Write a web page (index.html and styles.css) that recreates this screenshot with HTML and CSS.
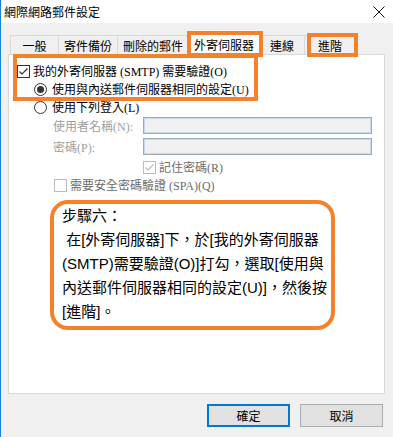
FILE: index.html
```html
<!DOCTYPE html>
<html lang="zh-Hant">
<head>
  <meta charset="UTF-8" />
  <title>網際網路郵件設定</title>
  <link rel="stylesheet" href="styles.css">
</head>
<body>
  <div class="window">
    <div class="titlebar">
      <span class="title">網際網路郵件設定</span>
      <svg class="close" width="12" height="12" viewBox="0 0 12 12">
        <path d="M0.5 0.5 L11.5 11.5 M11.5 0.5 L0.5 11.5" stroke="#111" stroke-width="1" fill="none"/>
      </svg>
    </div>

    <div class="tabs">
      <div class="tab w1">一般</div>
      <div class="tab w2">寄件備份</div>
      <div class="tab w3">刪除的郵件</div>
      <div class="tab active">外寄伺服器</div>
      <div class="tab w5">連線</div>
      <div class="tab w6">進階</div>
    </div>

    <div class="panel">
      <div class="row">
        <svg class="box" width="13" height="13" viewBox="0 0 13 13">
          <rect x="0.5" y="0.5" width="12" height="12" fill="#fff" stroke="#333"/>
          <path d="M2.5 6.5 L5 9 L10.5 3.5" stroke="#333" stroke-width="1.2" fill="none"/>
        </svg>
        <span class="label">我的外寄伺服器 (SMTP) 需要驗證(O)</span>
      </div>
      <div class="row indent">
        <svg class="radio" width="13" height="13" viewBox="0 0 13 13">
          <circle cx="6.5" cy="6.5" r="6" fill="#fff" stroke="#333"/>
          <circle cx="6.5" cy="6.5" r="3.5" fill="#333"/>
        </svg>
        <span class="label">使用與內送郵件伺服器相同的設定(U)</span>
      </div>
      <div class="row indent">
        <svg class="radio" width="13" height="13" viewBox="0 0 13 13">
          <circle cx="6.5" cy="6.5" r="6" fill="#fff" stroke="#333"/>
        </svg>
        <span class="label">使用下列登入(L)</span>
      </div>
      <div class="field first">
        <span class="field-label">使用者名稱(N):</span>
        <div class="input"></div>
      </div>
      <div class="field">
        <span class="field-label">密碼(P):</span>
        <div class="input"></div>
      </div>
      <div class="row remember">
        <svg class="box" width="13" height="13" viewBox="0 0 13 13">
          <rect x="0.5" y="0.5" width="12" height="12" fill="#fff" stroke="#bcbcbc"/>
          <path d="M2.5 6.5 L5 9 L10.5 3.5" stroke="#bcbcbc" stroke-width="1.2" fill="none"/>
        </svg>
        <span class="label muted">記住密碼(R)</span>
      </div>
      <div class="row spa">
        <svg class="box" width="13" height="13" viewBox="0 0 13 13">
          <rect x="0.5" y="0.5" width="12" height="12" fill="#fff" stroke="#bcbcbc"/>
        </svg>
        <span class="label muted">需要安全密碼驗證 (SPA)(Q)</span>
      </div>

      <div class="callout">
        步驟六：<br>
        &nbsp;在[外寄伺服器]下，於[我的外寄伺服器<br>
        (SMTP)需要驗證(O)]打勾，選取[使用與<br>
        內送郵件伺服器相同的設定(U)]，然後按<br>
        [進階]。
      </div>
    </div>

    <div class="buttons">
      <button class="btn default">確定</button>
      <button class="btn">取消</button>
    </div>

    <!-- annotation outlines -->
    <div class="mark mark-tab"></div>
    <div class="mark mark-opts"></div>
    <div class="mark mark-adv"></div>
  </div>
</body>
</html>
```

FILE: styles.css
```css
body {
  margin: 0;
  font-family: "Noto Sans CJK TC", sans-serif;
  font-size: 12px;
  color: #000;
}

.window {
  position: relative;
  width: 393px;
  height: 437px;
  box-sizing: border-box;
  border-left: 1px solid #1883d7;
  background: #f0f0f0;
  overflow: hidden;
}

.titlebar {
  height: 23px;
  background: #fff;
  display: flex;
  align-items: center;
  justify-content: space-between;
  padding: 0 8px 0 3px;
}

.title {
  font-size: 12px;
  line-height: 14px;
}

.tabs {
  display: flex;
  align-items: flex-end;
  height: 19px;
  margin-top: 12px;
  padding-left: 9px;
  position: relative;
  z-index: 1;
}

.tab {
  height: 19px;
  box-sizing: border-box;
  border: 1px solid #d9d9d9;
  border-bottom: none;
  margin-right: -1px;
  background: #f0f0f0;
  text-align: center;
  line-height: 20px;
}

.w1 { width: 49px; }
.w2 { width: 60px; }
.w3 { width: 72px; }
.w5 { width: 46px; }
.w6 { width: 52px; }

.tab.active {
  width: 72px;
  height: 22px;
  margin-bottom: -1px;
  background: #fff;
  line-height: 22px;
}

.panel {
  height: 340px;
  box-sizing: border-box;
  margin: 0 8px 0 7px;
  border: 1px solid #d9d9d9;
  background: #fff;
  padding: 7px 0 0 8px;
}

.row {
  display: flex;
  align-items: center;
  height: 18px;
}

.row svg {
  flex: none;
}

.label {
  font-family: "Liberation Serif", "Noto Sans CJK TC", serif;
  font-size: 12px;
  margin-left: 3px;
  white-space: nowrap;
}

.indent {
  margin-left: 17px;
}

.indent .label {
  margin-left: 5px;
}

.muted {
  color: #6d6d6d;
}

.field {
  display: flex;
  align-items: center;
  height: 17px;
  margin-top: 4px;
  margin-left: 36px;
}

.field.first {
  margin-top: 1px;
}

.field-label {
  width: 90px;
  font-family: "Liberation Serif", "Noto Sans CJK TC", serif;
  color: #a0a0a0;
  white-space: nowrap;
}

.input {
  width: 229px;
  height: 17px;
  box-sizing: border-box;
  background: #f0f0f0;
  border: 1px solid #9eabb9;
  box-shadow: inset 0 0 0 1px #c8d9ec;
}

.remember {
  margin-top: 3px;
  margin-left: 126px;
}

.spa {
  margin-left: 37px;
}

.callout {
  width: 285px;
  height: 130px;
  box-sizing: border-box;
  margin: 6px 0 0 33px;
  border: 4px solid #f5822a;
  border-radius: 18px;
  padding: 0 0 0 8px;
  font-family: "Liberation Sans", "Noto Sans CJK TC", sans-serif;
  font-size: 15px;
  line-height: 24px;
  white-space: nowrap;
}

.buttons {
  display: flex;
  justify-content: flex-end;
  gap: 10px;
  margin-top: 10px;
  padding-right: 10px;
}

.btn {
  width: 83px;
  height: 23px;
  box-sizing: border-box;
  background: #e1e1e1;
  border: 1px solid #adadad;
  font-family: "Noto Sans CJK TC", sans-serif;
  font-size: 12px;
  color: #000;
  padding: 0;
}

.btn.default {
  border: 2px solid #0078d7;
}

.mark {
  position: absolute;
  box-sizing: border-box;
  border: 4px solid #f5822a;
  z-index: 2;
}

.mark-tab {
  left: 186px;
  top: 31px;
  width: 76px;
  height: 26px;
}

.mark-opts {
  left: 12px;
  top: 54px;
  width: 245px;
  height: 47px;
}

.mark-adv {
  left: 306px;
  top: 33px;
  width: 51px;
  height: 24px;
}
```
